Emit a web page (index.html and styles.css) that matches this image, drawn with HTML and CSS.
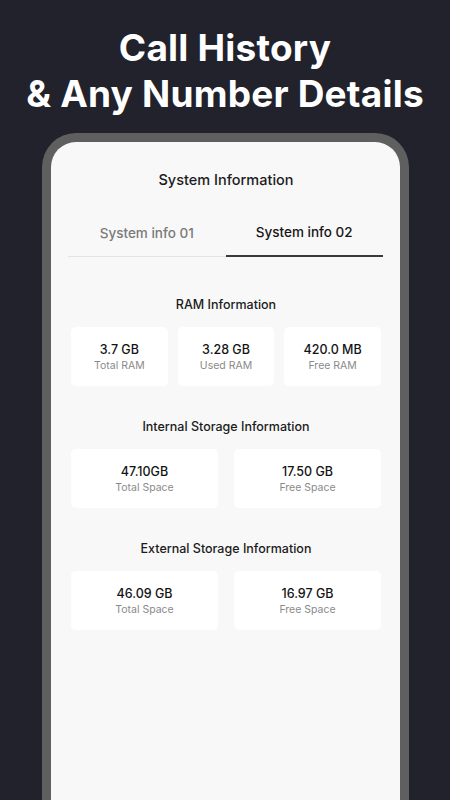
FILE: index.html
```html
<!DOCTYPE html>
<html lang="en">
<head>
<meta charset="utf-8">
<title>System Information</title>
<link rel="stylesheet" href="styles.css">
</head>
<body>
<header class="hero">
  <h1 class="hero-title">Call History<br>&amp; Any Number Details</h1>
</header>
<div class="phone">
  <div class="screen">
    <h2 class="screen-title">System Information</h2>
    <div class="tabs">
      <div class="tab">System info 01</div>
      <div class="tab tab-active">System info 02</div>
    </div>
    <section class="group group-first">
      <h3 class="group-title">RAM Information</h3>
      <div class="cards cards-3">
        <div class="card"><div class="value">3.7 GB</div><div class="label">Total RAM</div></div>
        <div class="card"><div class="value">3.28 GB</div><div class="label">Used RAM</div></div>
        <div class="card"><div class="value">420.0 MB</div><div class="label">Free RAM</div></div>
      </div>
    </section>
    <section class="group">
      <h3 class="group-title">Internal Storage Information</h3>
      <div class="cards cards-2">
        <div class="card"><div class="value">47.10GB</div><div class="label">Total Space</div></div>
        <div class="card"><div class="value">17.50 GB</div><div class="label">Free Space</div></div>
      </div>
    </section>
    <section class="group">
      <h3 class="group-title">External Storage Information</h3>
      <div class="cards cards-2">
        <div class="card"><div class="value">46.09 GB</div><div class="label">Total Space</div></div>
        <div class="card"><div class="value">16.97 GB</div><div class="label">Free Space</div></div>
      </div>
    </section>
  </div>
</div>
</body>
</html>
```
FILE: styles.css
```css
* { box-sizing: border-box; }
html, body { margin: 0; padding: 0; }
body {
  width: 450px;
  height: 800px;
  overflow: hidden;
  background: #21222b;
  font-family: Inter, "Noto Sans", sans-serif;
}
.hero {
  padding-top: 25px;
  text-align: center;
}
.hero-title {
  margin: 0;
  color: #ffffff;
  font-size: 37px;
  font-weight: 700;
  line-height: 46px;
  letter-spacing: 0.2px;
}
.phone {
  margin: 16px 0 0 42px;
  width: 367px;
  height: 700px;
  border: 9px solid #5f5f5f;
  border-bottom: 0;
  border-radius: 34px 34px 0 0;
  background: #5f5f5f;
}
.screen {
  height: 100%;
  background: #f8f8f8;
  border-radius: 25px 25px 0 0;
  padding: 28px 19px 0 20px;
}
.screen-title {
  margin: 0;
  text-align: center;
  font-size: 14.5px;
  font-weight: 500;
  line-height: 20px;
  color: #1c1c1c;
}
.tabs {
  margin: 32px -2px 0 -3px;
  display: flex;
  align-items: flex-end;
}
.tab {
  flex: 1;
  text-align: center;
  font-size: 13.5px;
  font-weight: 500;
  line-height: 20px;
  color: #7a7a7a;
  padding-bottom: 13px;
  border-bottom: 1px solid #e4e4e4;
}
.tab-active {
  color: #161616;
  border-bottom: 2px solid #3a3a3a;
}
.group { margin-top: 32px; }
.group-first { margin-top: 39px; }
.group-title {
  margin: 0 0 13px;
  text-align: center;
  font-size: 12.5px;
  font-weight: 500;
  line-height: 18px;
  color: #1c1c1c;
}
.cards { display: grid; }
.cards-3 { grid-template-columns: repeat(3, 1fr); gap: 10px; }
.cards-2 { grid-template-columns: repeat(2, 1fr); gap: 16px; }
.card {
  height: 59px;
  background: #ffffff;
  border-radius: 5px;
  padding-top: 14px;
  text-align: center;
}
.value {
  font-size: 12.5px;
  font-weight: 500;
  line-height: 18px;
  color: #141414;
}
.label {
  font-size: 10.5px;
  line-height: 14px;
  color: #8a8a8a;
}
```
